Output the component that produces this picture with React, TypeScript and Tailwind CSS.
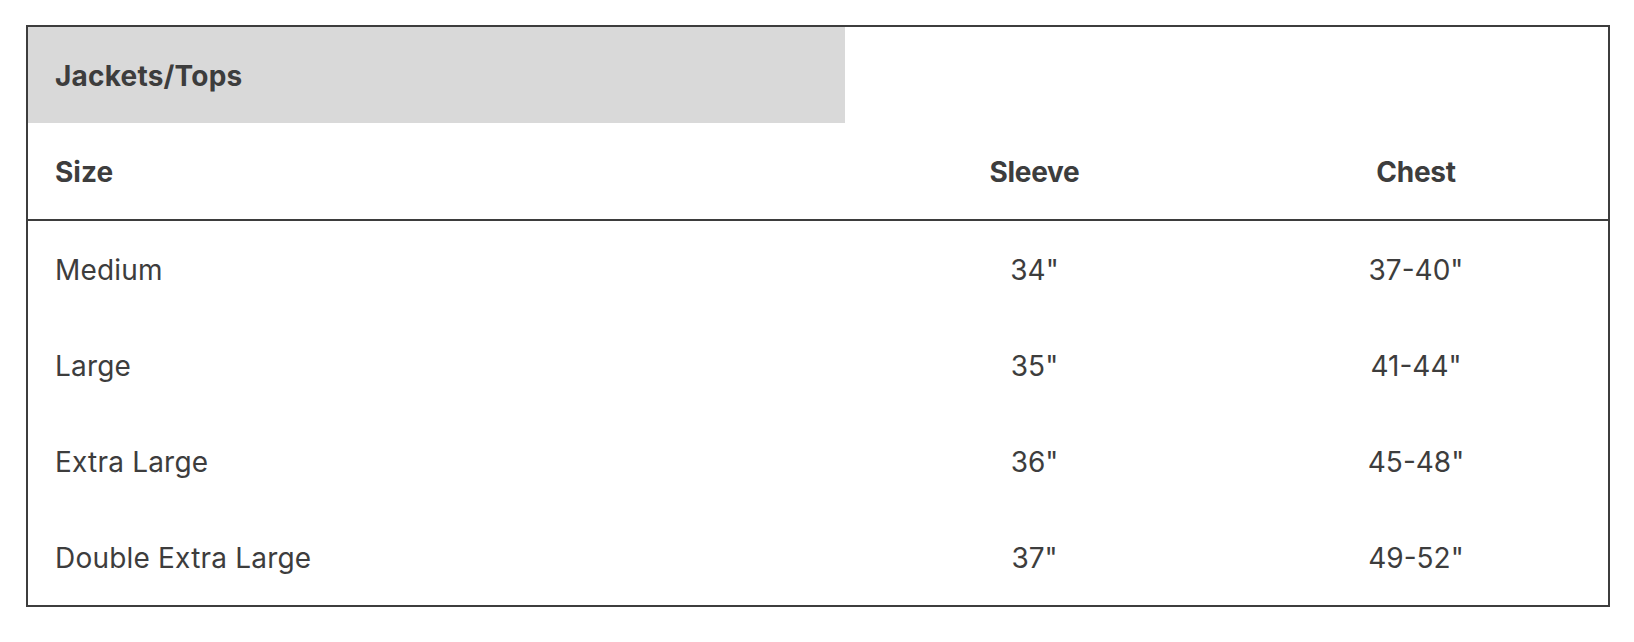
import React from "react";

const rows = [
  ["Medium", "34\"", "37-40\""],
  ["Large", "35\"", "41-44\""],
  ["Extra Large", "36\"", "45-48\""],
  ["Double Extra Large", "37\"", "49-52\""],
];

export default function App() {
  return (
    <div className="min-h-[642px] w-[1634px] bg-white pl-[26px] pt-[25px] text-[#3d3d3d]" style={{ fontFamily: "Inter, 'Noto Sans', sans-serif" }}>
      <div className="w-[1584px] border-2 border-[#3d3d3d]">
        <div className="grid grid-cols-[817px_379px_1fr]">
          <div className="flex h-[96px] items-center bg-[#d9d9d9] pl-[27px] pt-[2px] text-[28px] font-bold tracking-[0.2px]">Jackets/Tops</div>
          <div />
          <div />
          <div className="flex h-[96px] items-center pl-[27px] pt-[2px] text-[28px] font-bold">Size</div>
          <div className="flex h-[96px] items-center justify-center pt-[2px] text-[28px] font-bold tracking-[-0.3px]">Sleeve</div>
          <div className="flex h-[96px] items-center justify-center pt-[2px] text-[28px] font-bold tracking-[-0.3px]">Chest</div>
        </div>
        <div className="border-t-2 border-[#3d3d3d]">
          {rows.map((r) => (
            <div key={r[0]} className="grid h-[96px] grid-cols-[817px_379px_1fr] items-center pt-[2px] text-[28px]">
              <div className="pl-[27px] tracking-[0.2px]">{r[0]}</div>
              <div className="text-center">{r[1]}</div>
              <div className="text-center">{r[2]}</div>
            </div>
          ))}
        </div>
      </div>
    </div>
  );
}
